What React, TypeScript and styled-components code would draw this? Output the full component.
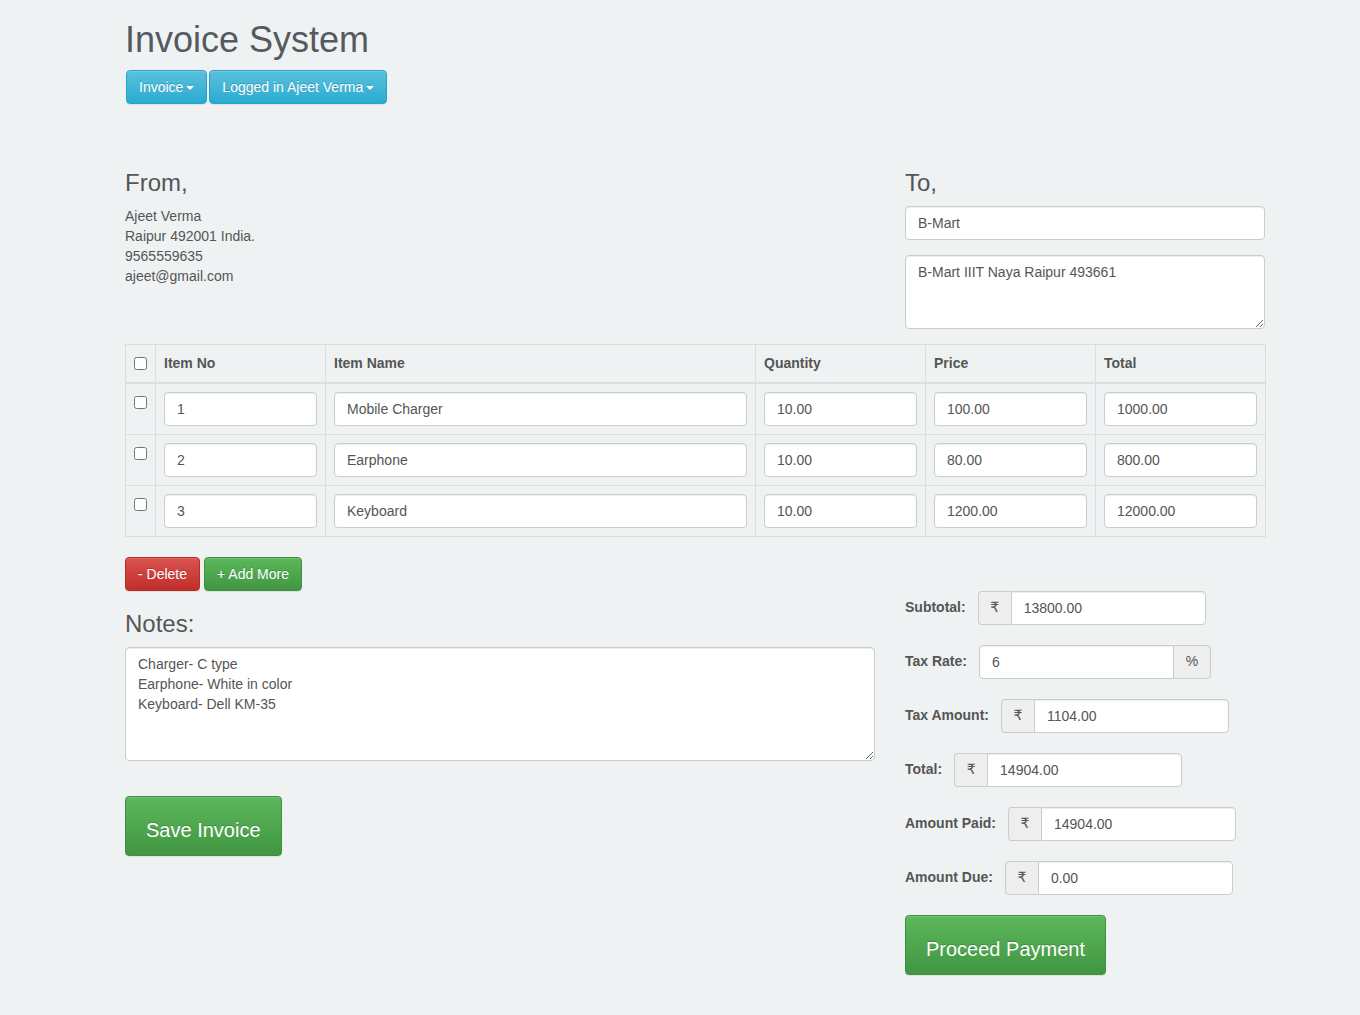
import React from "react";
import styled, { createGlobalStyle, css } from "styled-components";

const GlobalStyle = createGlobalStyle`
  * { box-sizing: border-box; }
  html, body { margin: 0; padding: 0; }
  body {
    background: #eff2f3;
    font-family: "Liberation Sans", Arial, "DejaVu Sans", sans-serif;
    font-size: 14px;
    line-height: 1.42857;
    color: #555;
  }
`;

const Page = styled.div`
  width: 1140px;
  margin-left: 125px;
  padding-bottom: 30px;
`;

const Title = styled.h1`
  font-size: 36px;
  font-weight: 500;
  line-height: 1.1;
  margin: 20px 0 10px;
  color: #555a5f;
`;

const Nav = styled.div`
  display: flex;
  gap: 2px;
  padding-left: 1px;
`;

const Caret = styled.span`
  display: inline-block;
  width: 0;
  height: 0;
  margin-left: 3px;
  vertical-align: middle;
  border-top: 4px solid #fff;
  border-left: 4px solid transparent;
  border-right: 4px solid transparent;
`;

type Variant = "info" | "danger" | "success";

const variants: Record<Variant, ReturnType<typeof css>> = {
  info: css`
    background-image: linear-gradient(to bottom, #5bc0de 0, #2aabd2 100%);
    border-color: #28a4c9;
  `,
  danger: css`
    background-image: linear-gradient(to bottom, #d9534f 0, #c12e2a 100%);
    border-color: #b92c28;
  `,
  success: css`
    background-image: linear-gradient(to bottom, #5cb85c 0, #419641 100%);
    border-color: #3e8f3e;
  `,
};

const Button = styled.button<{ $variant: Variant; $large?: boolean }>`
  display: inline-block;
  font-family: inherit;
  font-size: 14px;
  line-height: 20px;
  padding: 6px 12px;
  border: 1px solid transparent;
  border-radius: 4px;
  color: #fff;
  text-shadow: 0 -1px 0 rgba(0, 0, 0, 0.2);
  box-shadow: inset 0 1px 0 rgba(255, 255, 255, 0.15), 0 1px 1px rgba(0, 0, 0, 0.075);
  cursor: pointer;
  white-space: nowrap;
  ${(p) => variants[p.$variant]}
  ${(p) =>
    p.$large &&
    css`
      font-size: 20px;
      line-height: 26px;
      padding: 20px 20px 12px;
      border-radius: 4px;
    `}
`;

const Parties = styled.div`
  display: flex;
  justify-content: space-between;
  margin-top: 46px;
`;

const FromCol = styled.div`
  width: 750px;
`;

const ToCol = styled.div`
  width: 360px;
`;

const SectionTitle = styled.h3`
  font-size: 24px;
  font-weight: 500;
  line-height: 1.1;
  margin: 20px 0 10px;
  color: #555;
`;

const Address = styled.address`
  font-style: normal;
  line-height: 20px;
  margin: 0 0 20px;
`;

const FormGroup = styled.div`
  margin-bottom: 15px;
`;

const inputBase = css`
  display: block;
  width: 100%;
  font-family: inherit;
  font-size: 14px;
  line-height: 20px;
  color: #555;
  background: #fff;
  border: 1px solid #ccc;
  border-radius: 4px;
  box-shadow: inset 0 1px 1px rgba(0, 0, 0, 0.075);
  padding: 6px 12px;
  outline: none;
`;

const TextInput = styled.input`
  ${inputBase}
  height: 34px;
`;

const TextArea = styled.textarea<{ $rows: number }>`
  ${inputBase}
  height: ${(p) => p.$rows * 20 + 14}px;
  resize: vertical;
`;

const Table = styled.table`
  width: 1140px;
  table-layout: fixed;
  border-collapse: collapse;
  border: 1px solid #ddd;
  margin-bottom: 20px;
`;

const Th = styled.th`
  text-align: left;
  font-weight: bold;
  padding: 8px 8px 9px;
  line-height: 20px;
  border: 1px solid #ddd;
  border-bottom-width: 2px;
  vertical-align: top;
  color: #555;
`;

const Td = styled.td`
  padding: 8px;
  line-height: 20px;
  border: 1px solid #ddd;
  vertical-align: top;
`;

const Check = styled.input.attrs({ type: "checkbox" })`
  display: block;
  width: 13px;
  height: 13px;
  margin: 4px 0 0 0;
`;

const Actions = styled.div`
  display: flex;
  gap: 4px;
`;

const Bottom = styled.div`
  display: flex;
  justify-content: space-between;
`;

const NotesCol = styled.div`
  width: 750px;
`;

const SaveWrap = styled.div`
  padding-top: 20px;
`;

const TotalsCol = styled.div`
  width: 360px;
`;

const TotalRow = styled.div`
  display: flex;
  align-items: center;
  margin-bottom: 20px;
`;

const Label = styled.label`
  font-weight: bold;
  margin-right: 12px;
  color: #555;
`;

const InputGroup = styled.div`
  display: flex;
`;

const Addon = styled.span<{ $side: "left" | "right" }>`
  display: flex;
  align-items: center;
  justify-content: center;
  height: 34px;
  padding: 6px 12px;
  font-family: "Liberation Sans", "DejaVu Sans", "Noto Sans", sans-serif;
  font-size: 14px;
  color: #555;
  background: #eee;
  border: 1px solid #ccc;
  ${(p) =>
    p.$side === "left"
      ? css`
          border-right: 0;
          border-radius: 4px 0 0 4px;
          width: 33px;
        `
      : css`
          border-left: 0;
          border-radius: 0 4px 4px 0;
          width: 37px;
        `}
`;

const GroupInput = styled.input<{ $addon: "left" | "right" }>`
  ${inputBase}
  width: 195px;
  height: 34px;
  border-radius: ${(p) => (p.$addon === "left" ? "0 4px 4px 0" : "4px 0 0 4px")};
`;

const items = [
  { no: "1", name: "Mobile Charger", qty: "10.00", price: "100.00", total: "1000.00" },
  { no: "2", name: "Earphone", qty: "10.00", price: "80.00", total: "800.00" },
  { no: "3", name: "Keyboard", qty: "10.00", price: "1200.00", total: "12000.00" },
];

const totals: { label: string; value: string; addon: string; side: "left" | "right" }[] = [
  { label: "Subtotal:", value: "13800.00", addon: "₹", side: "left" },
  { label: "Tax Rate:", value: "6", addon: "%", side: "right" },
  { label: "Tax Amount:", value: "1104.00", addon: "₹", side: "left" },
  { label: "Total:", value: "14904.00", addon: "₹", side: "left" },
  { label: "Amount Paid:", value: "14904.00", addon: "₹", side: "left" },
  { label: "Amount Due:", value: "0.00", addon: "₹", side: "left" },
];

export default function App() {
  return (
    <>
      <GlobalStyle />
      <Page>
        <Title>Invoice System</Title>
        <Nav>
          <Button $variant="info">
            Invoice<Caret />
          </Button>
          <Button $variant="info">
            Logged in Ajeet Verma<Caret />
          </Button>
        </Nav>

        <Parties>
          <FromCol>
            <SectionTitle>From,</SectionTitle>
            <Address>
              Ajeet Verma
              <br />
              Raipur 492001 India.
              <br />
              9565559635
              <br />
              ajeet@gmail.com
            </Address>
          </FromCol>
          <ToCol>
            <SectionTitle>To,</SectionTitle>
            <FormGroup>
              <TextInput defaultValue="B-Mart" />
            </FormGroup>
            <FormGroup>
              <TextArea $rows={3} defaultValue="B-Mart IIIT Naya Raipur 493661" />
            </FormGroup>
          </ToCol>
        </Parties>

        <Table>
          <colgroup>
            <col style={{ width: 30 }} />
            <col style={{ width: 170 }} />
            <col style={{ width: 430 }} />
            <col style={{ width: 170 }} />
            <col style={{ width: 170 }} />
            <col style={{ width: 170 }} />
          </colgroup>
          <thead>
            <tr>
              <Th>
                <Check />
              </Th>
              <Th>Item No</Th>
              <Th>Item Name</Th>
              <Th>Quantity</Th>
              <Th>Price</Th>
              <Th>Total</Th>
            </tr>
          </thead>
          <tbody>
            {items.map((it) => (
              <tr key={it.no}>
                <Td>
                  <Check />
                </Td>
                <Td>
                  <TextInput defaultValue={it.no} />
                </Td>
                <Td>
                  <TextInput defaultValue={it.name} />
                </Td>
                <Td>
                  <TextInput defaultValue={it.qty} />
                </Td>
                <Td>
                  <TextInput defaultValue={it.price} />
                </Td>
                <Td>
                  <TextInput defaultValue={it.total} />
                </Td>
              </tr>
            ))}
          </tbody>
        </Table>

        <Actions>
          <Button $variant="danger">- Delete</Button>
          <Button $variant="success">+ Add More</Button>
        </Actions>

        <Bottom>
          <NotesCol>
            <SectionTitle>Notes:</SectionTitle>
            <FormGroup>
              <TextArea
                $rows={5}
                defaultValue={"Charger- C type\nEarphone- White in color\nKeyboard- Dell KM-35"}
              />
            </FormGroup>
            <SaveWrap>
              <Button $variant="success" $large>
                Save Invoice
              </Button>
            </SaveWrap>
          </NotesCol>
          <TotalsCol>
            {totals.map((t) => (
              <TotalRow key={t.label}>
                <Label>{t.label}</Label>
                <InputGroup>
                  {t.side === "left" && <Addon $side="left">{t.addon}</Addon>}
                  <GroupInput $addon={t.side} defaultValue={t.value} />
                  {t.side === "right" && <Addon $side="right">{t.addon}</Addon>}
                </InputGroup>
              </TotalRow>
            ))}
            <Button $variant="success" $large>
              Proceed Payment
            </Button>
          </TotalsCol>
        </Bottom>
      </Page>
    </>
  );
}
